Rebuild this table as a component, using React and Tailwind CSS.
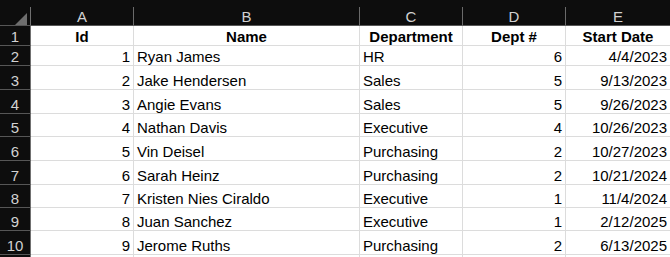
import React from "react";

const columns = [
  { key: "A", width: "w-[103px]" },
  { key: "B", width: "w-[226px]" },
  { key: "C", width: "w-[103px]" },
  { key: "D", width: "w-[103px]" },
  { key: "E", width: "w-[105px]" },
];

const heights = [
  "h-[20px]",
  "h-[20px]",
  "h-[24px]",
  "h-[24px]",
  "h-[23px]",
  "h-[24px]",
  "h-[24px]",
  "h-[23px]",
  "h-[23px]",
  "h-[24px]",
  "h-[24px]",
];

const employees = [
  [1, "Ryan James", "HR", 6, "4/4/2023"],
  [2, "Jake Hendersen", "Sales", 5, "9/13/2023"],
  [3, "Angie Evans", "Sales", 5, "9/26/2023"],
  [4, "Nathan Davis", "Executive", 4, "10/26/2023"],
  [5, "Vin Deisel", "Purchasing", 2, "10/27/2023"],
  [6, "Sarah Heinz", "Purchasing", 2, "10/21/2024"],
  [7, "Kristen Nies Ciraldo", "Executive", 1, "11/4/2024"],
  [8, "Juan Sanchez", "Executive", 1, "2/12/2025"],
  [9, "Jerome Ruths", "Purchasing", 2, "6/13/2025"],
];

const headers = ["Id", "Name", "Department", "Dept #", "Start Date"];

// text cells sit on the bottom edge, like Excel does
const Cell = ({ width, align, bold, children }) => (
  <div
    className={`${width} shrink-0 flex items-end border-r border-b border-[#dcdcdc] pb-[1px] leading-[15px] whitespace-nowrap overflow-hidden ${
      align === "right" ? "justify-end pr-[3px]" : align === "center" ? "justify-center" : "justify-start pl-[3px]"
    } ${bold ? "font-bold" : ""}`}
  >
    {children}
  </div>
);

const RowHeader = ({ children }) => (
  <div className="w-[31px] shrink-0 flex items-end justify-center bg-[#0d0d0d] border-r border-r-[#707070] border-b border-b-[#565656] text-[#d2d2d2] pb-[1px] leading-[15px]">
    {children}
  </div>
);

export default function App() {
  const rows = [headers, ...employees];
  return (
    <div className="w-[670px] h-[257px] overflow-hidden bg-white text-[15px] text-black font-['Liberation_Sans',Arial,sans-serif]">
      <div className="flex h-[26px] bg-[#0d0d0d] pt-[7px]">
        <div className="relative w-[31px] shrink-0 border-r border-r-[#707070] border-b border-b-[#565656]">
          <svg className="absolute left-[15px] top-[6px]" width="12" height="12" viewBox="0 0 12 12">
            <polygon points="12,0 12,12 0,12" fill="#6e6e6e" />
          </svg>
        </div>
        {columns.map((c) => (
          <div
            key={c.key}
            className={`${c.width} shrink-0 flex items-end justify-center border-r border-r-[#6a6a6a] border-b border-b-[#565656] text-[#d2d2d2] pb-[1px] leading-[15px]`}
          >
            {c.key}
          </div>
        ))}
      </div>
      {heights.map((h, i) => {
        const row = rows[i] || ["", "", "", "", ""];
        const isHead = i === 0;
        return (
          <div key={i} className={`flex ${h}`}>
            <RowHeader>{i < rows.length ? i + 1 : ""}</RowHeader>
            <Cell width={columns[0].width} align={isHead ? "center" : "right"} bold={isHead}>
              {row[0]}
            </Cell>
            <Cell width={columns[1].width} align={isHead ? "center" : "left"} bold={isHead}>
              {row[1]}
            </Cell>
            <Cell width={columns[2].width} align={isHead ? "center" : "left"} bold={isHead}>
              {row[2]}
            </Cell>
            <Cell width={columns[3].width} align={isHead ? "center" : "right"} bold={isHead}>
              {row[3]}
            </Cell>
            <Cell width={columns[4].width} align={isHead ? "center" : "right"} bold={isHead}>
              {row[4]}
            </Cell>
          </div>
        );
      })}
    </div>
  );
}
